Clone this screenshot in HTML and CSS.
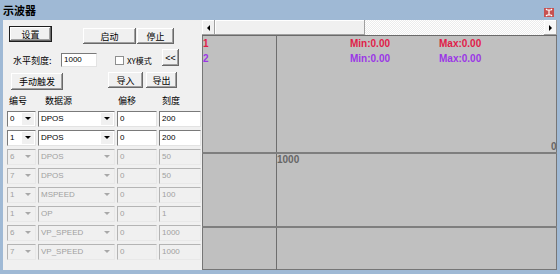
FILE: index.html
```html
<!DOCTYPE html>
<html lang="zh">
<head>
  <meta charset="UTF-8">
  <title>示波器</title>
  <link rel="stylesheet" href="styles.css">
</head>
<body>
  <div class="window">
    <div class="titlebar">
      <span class="title">示波器</span>
      <span class="close-btn">
        <svg width="10" height="9" viewBox="0 0 10 9"><path d="M3 2h4M5 2v5M3 7h4M2 1l1 1M8 1l-1 1M2 8l1-1M8 8l-1-1" stroke="#fff" stroke-width="1.2" fill="none"/></svg>
      </span>
    </div>

    <div class="client">
      <!-- left control panel -->
      <div class="controls">
        <div class="ctl-row row-actions">
          <button class="btn btn-default btn-setup">设置</button>
          <button class="btn btn-start">启动</button>
          <button class="btn btn-stop">停止</button>
        </div>

        <div class="ctl-row row-scale">
          <span class="lbl lbl-scale">水平刻度:</span>
          <span class="field field-scale">1000</span>
          <span class="checkbox"></span>
          <span class="lbl lbl-xy">XY模式</span>
          <button class="btn btn-collapse">&lt;&lt;</button>
        </div>

        <div class="ctl-row row-trigger">
          <button class="btn btn-trigger">手动触发</button>
          <button class="btn btn-import">导入</button>
          <button class="btn btn-export">导出</button>
        </div>

        <div class="col-head">
          <span class="head-num">编号</span>
          <span class="head-src">数据源</span>
          <span class="head-off">偏移</span>
          <span class="head-scale">刻度</span>
        </div>

        <div class="channels" id="channels"></div>
      </div>

      <!-- scope view -->
      <div class="scope">
        <div class="hscroll">
          <span class="sb-btn"><span class="arrow-left"></span></span>
          <span class="sb-thumb"></span>
          <span class="sb-track"></span>
          <span class="sb-btn sb-btn-right"><span class="arrow-right"></span></span>
        </div>
        <div class="plot">
          <svg width="355" height="235" viewBox="0 0 355 235">
            <rect x="0.5" y="0.5" width="354" height="234" fill="#c0c0c0" stroke="#767676"/>
            <line x1="0" y1="0.5" x2="355" y2="0.5" stroke="#6a6a6a"/>
            <line x1="74.5" y1="0" x2="74.5" y2="235" stroke="#6e6e6e"/>
            <line x1="0" y1="118" x2="355" y2="118" stroke="#7e7e7e" stroke-width="2"/>
            <line x1="0" y1="192" x2="355" y2="192" stroke="#7e7e7e" stroke-width="2"/>
            <text class="trace-1" x="1" y="12">1</text>
            <text class="trace-1" x="148" y="12">Min:0.00</text>
            <text class="trace-1" x="237" y="12">Max:0.00</text>
            <text class="trace-2" x="1" y="27">2</text>
            <text class="trace-2" x="148" y="27">Min:0.00</text>
            <text class="trace-2" x="237" y="27">Max:0.00</text>
            <text class="axis-label" x="75" y="128">1000</text>
            <text class="axis-label" x="349" y="115">0</text>
          </svg>
        </div>
      </div>
    </div>
  </div>

  <script>
    const channels = [
      { num: '0', src: 'DPOS', off: '0', scale: '200', on: true },
      { num: '1', src: 'DPOS', off: '0', scale: '200', on: true },
      { num: '6', src: 'DPOS', off: '0', scale: '50', on: false },
      { num: '7', src: 'DPOS', off: '0', scale: '50', on: false },
      { num: '1', src: 'MSPEED', off: '0', scale: '100', on: false },
      { num: '1', src: 'OP', off: '0', scale: '1', on: false },
      { num: '6', src: 'VP_SPEED', off: '0', scale: '1000', on: false },
      { num: '7', src: 'VP_SPEED', off: '0', scale: '1000', on: false }
    ];

    const list = document.getElementById('channels');
    channels.forEach(function(ch) {
      const cls = ch.on ? '' : ' disabled';
      list.insertAdjacentHTML('beforeend',
        '<span class="combo' + cls + '"><span class="combo-text">' + ch.num + '</span><span class="combo-btn"><span class="arrow-down"></span></span></span>' +
        '<span class="combo' + cls + '"><span class="combo-text">' + ch.src + '</span><span class="combo-btn"><span class="arrow-down"></span></span></span>' +
        '<span class="field' + cls + '">' + ch.off + '</span>' +
        '<span class="field' + cls + '">' + ch.scale + '</span>');
    });
  </script>
</body>
</html>
```

FILE: styles.css
```css
:root {
  --frame: #9fb9d5;
  --panel: #f0f0f0;
  --scope-bg: #c0c0c0;
  --text: #000000;
  --text-disabled: #a0a0a0;
  --edge-dark: #7a7a7a;
  --edge-light: #e3e3e3;
  --trace-1: #e01c48;
  --trace-2: #9b36e6;
}

* {
  margin: 0;
  padding: 0;
  box-sizing: border-box;
}

body {
  font-family: 'Liberation Sans', 'Noto Sans CJK SC', sans-serif;
  font-size: 9px;
  color: var(--text);
  background: #ffffff;
  overflow: hidden;
}

.window {
  width: 560px;
  height: 274px;
  background-color: var(--frame);
  display: flex;
  flex-direction: column;
}

.titlebar {
  height: 20px;
  display: flex;
  justify-content: space-between;
  align-items: flex-start;
  padding: 0 6px 0 3px;
}

.title {
  margin-top: 3px;
  font-size: 11px;
  font-weight: 700;
  font-family: 'Noto Sans CJK SC', sans-serif;
  line-height: 14px;
}

.close-btn {
  margin-top: 8px;
  width: 10px;
  height: 9px;
  background-color: #c75050;
  display: flex;
}

.client {
  display: flex;
  height: 250px;
  margin: 0 3px 0 3px;
}

/* left control panel */

.controls {
  width: 199px;
  background-color: var(--panel);
  display: flex;
  flex-direction: column;
}

.ctl-row {
  display: flex;
}

.btn {
  font: inherit;
  font-family: 'Noto Sans CJK SC', sans-serif;
  font-size: 9px;
  height: 16px;
  background-color: var(--panel);
  border: none;
  box-shadow: inset -1px -1px #696969, inset 1px 1px #ffffff, inset -2px -2px #a0a0a0;
  display: flex;
  align-items: center;
  justify-content: center;
  color: var(--text);
}

.btn-default {
  border: 1px solid #1e1e1e;
}

.row-actions {
  margin-top: 6px;
  align-items: flex-start;
  height: 18px;
}

.btn-setup {
  margin-left: 6px;
  width: 43px;
}

.btn-start {
  margin: 2px 0 0 31px;
  width: 53px;
}

.btn-stop {
  margin: 2px 0 0 1px;
  width: 37px;
}

.row-scale {
  margin-top: 9px;
  height: 14px;
  align-items: center;
}

.lbl {
  font-family: 'Noto Sans CJK SC', sans-serif;
  white-space: nowrap;
}

.lbl-scale {
  margin-left: 10px;
  width: 48px;
}

.field {
  height: 14px;
  background-color: #ffffff;
  border-style: solid;
  border-width: 1px;
  border-color: var(--edge-dark) var(--edge-light) var(--edge-light) var(--edge-dark);
  padding-left: 2px;
  font-size: 8px;
  line-height: 12px;
  overflow: hidden;
}

.field-scale {
  width: 36px;
}

.checkbox {
  margin-left: 18px;
  width: 9px;
  height: 9px;
  background-color: #ffffff;
  border: 1px solid #8e8f8f;
}

.lbl-xy {
  margin-left: 3px;
  width: 35px;
  font-size: 8px;
}

.btn-collapse {
  align-self: flex-start;
  margin-top: -4px;
  width: 17px;
  height: 17px;
  font-family: 'Liberation Sans', sans-serif;
  font-size: 9px;
}

.row-trigger {
  margin-top: 5px;
  height: 18px;
  align-items: flex-start;
}

.btn-trigger {
  margin: 1px 0 0 8px;
  width: 52px;
  height: 17px;
}

.btn-import {
  margin-left: 45px;
  width: 35px;
}

.btn-export {
  margin-left: 3px;
  width: 31px;
}

.col-head {
  margin-top: 4px;
  height: 12px;
  display: flex;
  align-items: center;
  font-family: 'Noto Sans CJK SC', sans-serif;
}

.head-num {
  margin-left: 6px;
  width: 36px;
}

.head-src {
  width: 73px;
}

.head-off {
  width: 44px;
}

.channels {
  margin-top: 5px;
  padding-left: 4px;
  display: grid;
  grid-template-columns: 29px 77px 40px 42px;
  grid-auto-rows: 16px;
  column-gap: 2px;
  row-gap: 3px;
}

.channels .field {
  height: 16px;
  line-height: 14px;
}

.combo {
  display: flex;
  background-color: #ffffff;
  border-style: solid;
  border-width: 1px;
  border-color: var(--edge-dark) var(--edge-light) var(--edge-light) var(--edge-dark);
  font-size: 8px;
  line-height: 14px;
}

.combo-text {
  flex: 1;
  padding-left: 2px;
  overflow: hidden;
  white-space: nowrap;
}

.combo-btn {
  width: 12px;
  margin: 1px 1px 1px 0;
  background-color: var(--panel);
  display: flex;
  align-items: center;
  justify-content: center;
}

.arrow-down {
  width: 0;
  height: 0;
  border-left: 3px solid transparent;
  border-right: 3px solid transparent;
  border-top: 3px solid #000000;
  border-bottom: 1px solid transparent;
  box-shadow: 0 1px 0 -0px transparent;
}

.disabled {
  background-color: var(--panel);
  color: var(--text-disabled);
  border-color: #b4b4b4 #e8e8e8 #e8e8e8 #b4b4b4;
}

.disabled .arrow-down {
  border-top-color: #a8a8a8;
}

/* scope view */

.scope {
  width: 355px;
  display: flex;
  flex-direction: column;
}

.hscroll {
  height: 15px;
  display: flex;
  background-color: var(--panel);
}

.sb-btn {
  width: 13px;
  background-color: var(--panel);
  box-shadow: inset -1px -1px #a0a0a0, inset 1px 1px #ffffff;
  display: flex;
  align-items: center;
  justify-content: center;
}

.sb-btn-right {
  background-color: #f7f7f7;
}

.arrow-left {
  border-top: 3px solid transparent;
  border-bottom: 3px solid transparent;
  border-right: 3px solid #000000;
}

.arrow-right {
  border-top: 3px solid transparent;
  border-bottom: 3px solid transparent;
  border-left: 3px solid #000000;
}

.sb-thumb {
  width: 150px;
  background-color: var(--panel);
  box-shadow: inset -1px -1px #a0a0a0, inset 1px 1px #ffffff;
}

.sb-track {
  flex: 1;
  background: repeating-conic-gradient(#ffffff 0 25%, #ececec 0 50%) 0 0 / 2px 2px;
}

.plot {
  height: 235px;
  display: flex;
}

.plot text {
  font-family: 'Liberation Sans', sans-serif;
  font-size: 10px;
  font-weight: 700;
}

.plot .trace-1 {
  fill: var(--trace-1);
}

.plot .trace-2 {
  fill: var(--trace-2);
}

.plot .axis-label {
  fill: #666666;
}
```
